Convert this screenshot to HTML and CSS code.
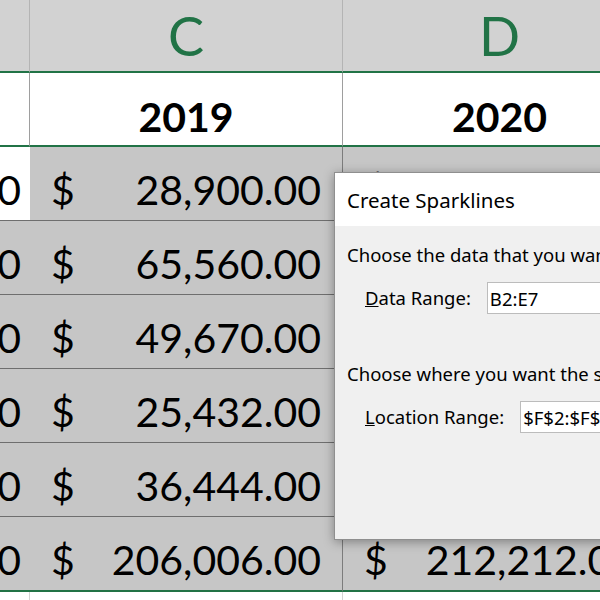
FILE: index.html
```html
<!DOCTYPE html>
<html lang="en">
<head>
    <meta charset="UTF-8">
    <meta name="viewport" content="width=device-width, initial-scale=1.0">
    <title>Create Sparklines</title>
    <link rel="stylesheet" href="styles.css">
</head>
<body>
    <div class="sheet">
        <!-- column headers -->
        <div class="col-head"></div>
        <div class="col-head">C</div>
        <div class="col-head">D</div>

        <!-- year row -->
        <div class="year-cell"></div>
        <div class="year-cell">2019</div>
        <div class="year-cell">2020</div>

        <!-- data rows -->
        <div class="cell col-a active"><span>$ 12,400.00</span></div>
        <div class="cell"><span>$</span><span>28,900.00</span></div>
        <div class="cell"><span>$</span><span>31,250.00</span></div>

        <div class="cell col-a"><span>$ 60,120.00</span></div>
        <div class="cell"><span>$</span><span>65,560.00</span></div>
        <div class="cell"><span>$</span><span>70,300.00</span></div>

        <div class="cell col-a"><span>$ 45,900.00</span></div>
        <div class="cell"><span>$</span><span>49,670.00</span></div>
        <div class="cell"><span>$</span><span>52,840.00</span></div>

        <div class="cell col-a"><span>$ 22,310.00</span></div>
        <div class="cell"><span>$</span><span>25,432.00</span></div>
        <div class="cell"><span>$</span><span>24,118.00</span></div>

        <div class="cell col-a"><span>$ 33,870.00</span></div>
        <div class="cell"><span>$</span><span>36,444.00</span></div>
        <div class="cell"><span>$</span><span>33,654.00</span></div>

        <div class="cell col-a total"><span>$ 174,600.00</span></div>
        <div class="cell total"><span>$</span><span>206,006.00</span></div>
        <div class="cell total"><span>$</span><span>212,212.00</span></div>

        <div class="blank"></div>
        <div class="blank"></div>
        <div class="blank"></div>
    </div>

    <div class="dialog">
        <div class="dialog-title">Create Sparklines</div>
        <div class="dialog-body">
            <p class="prompt">Choose the data that you want to evaluate for the sparklines</p>
            <div class="field">
                <label for="dataRange"><u>D</u>ata Range:</label>
                <input type="text" id="dataRange" value="B2:E7">
            </div>
            <p class="prompt second">Choose where you want the sparklines to be placed</p>
            <div class="field">
                <label for="locRange"><u>L</u>ocation Range:</label>
                <input type="text" id="locRange" value="$F$2:$F$7">
            </div>
        </div>
    </div>
</body>
</html>
```

FILE: styles.css
```css
body {
    margin: 0;
    width: 600px;
    height: 600px;
    overflow: hidden;
    position: relative;
    background: #ffffff;
    font-family: Lato, "Liberation Sans", sans-serif;
}
.sheet {
    display: grid;
    grid-template-columns: 30px 313px 314px;
    grid-template-rows: 73px 74px 74px 74px 74px 74px 74px 75px 20px;
}
.col-head {
    background: #d2d2d2;
    color: #217346;
    font-size: 54px;
    line-height: 1;
    display: flex;
    align-items: center;
    justify-content: center;
    border-right: 1px solid #b4b4b4;
    border-bottom: 2px solid #217346;
}
.year-cell {
    background: #ffffff;
    font-size: 41px;
    font-weight: bold;
    line-height: 1;
    display: flex;
    align-items: flex-end;
    justify-content: center;
    padding-bottom: 8px;
    border-right: 1px solid #9e9e9e;
    border-bottom: 2px solid #217346;
}
.cell {
    background: #c6c6c6;
    font-size: 41px;
    line-height: 1;
    white-space: nowrap;
    display: flex;
    align-items: flex-end;
    justify-content: space-between;
    padding: 0 21px 10px 21px;
    border-right: 1px solid #7c7c7c;
    border-bottom: 1px solid #6e6e6e;
}
.cell.col-a {
    justify-content: flex-end;
    overflow: hidden;
}
.cell.active {
    background: #ffffff;
}
.cell.total {
    border-bottom: 2px solid #217346;
}
.blank {
    border-right: 1px solid #d4d4d4;
}

/* dialog */
.dialog {
    position: absolute;
    left: 334px;
    top: 172px;
    width: 320px;
    height: 366px;
    background: #f0f0f0;
    border: 1px solid #8f8f8f;
    box-shadow: 0 2px 10px rgba(0, 0, 0, 0.35);
    font-family: "Noto Sans", "Open Sans", sans-serif;
    font-size: 18.5px;
    color: #000000;
    white-space: nowrap;
    overflow: hidden;
}
.dialog-title {
    background: #ffffff;
    height: 53px;
    line-height: 55px;
    padding-left: 12px;
    font-size: 20.5px;
}
.dialog-body {
    padding: 16px 0 0 12px;
}
.prompt {
    margin: 0;
    line-height: 26px;
}
.prompt.second {
    margin-top: 47px;
}
.field {
    display: flex;
    align-items: center;
    gap: 16px;
    margin-top: 14px;
    padding-left: 18px;
}
.field label {
    line-height: 32px;
}
.field input {
    height: 32px;
    box-sizing: border-box;
    width: 200px;
    border: 1px solid #bcbcbc;
    background: #ffffff;
    font-family: inherit;
    font-size: 18.5px;
    padding: 0 2px;
    margin: 0;
    color: #000000;
}
```
